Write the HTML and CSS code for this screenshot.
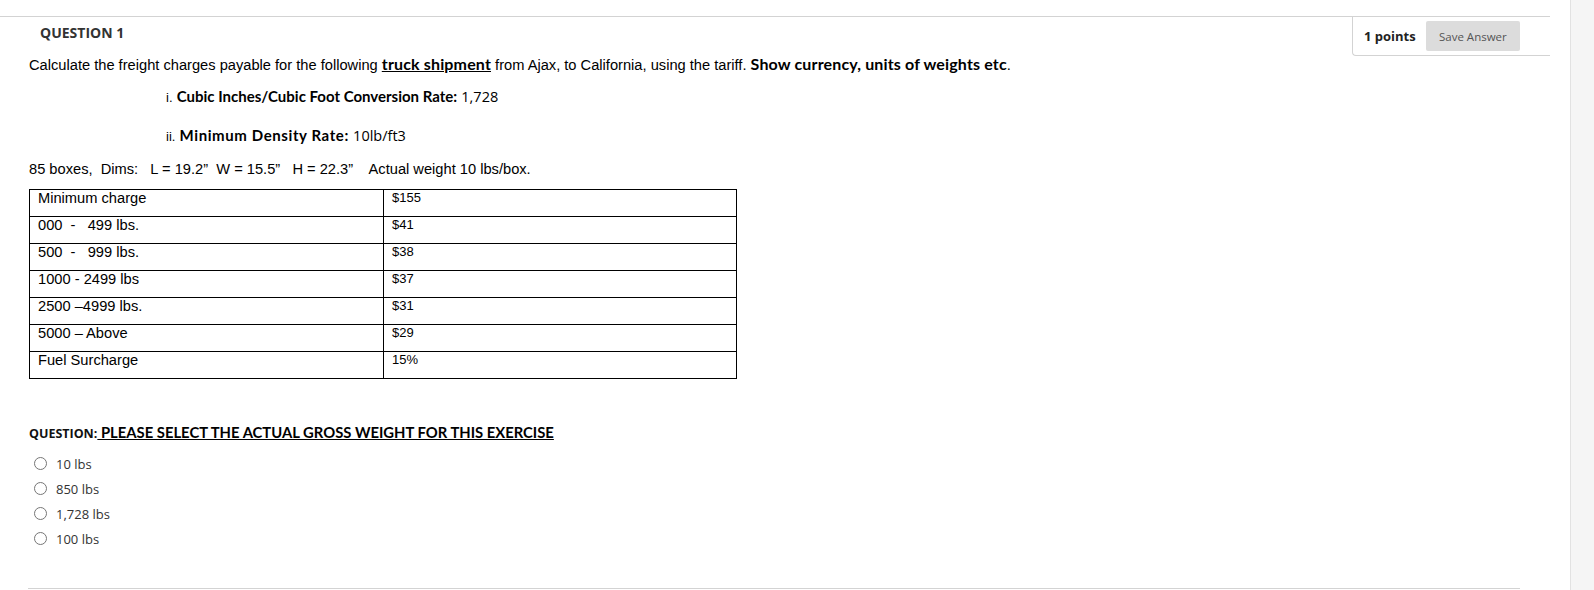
FILE: index.html
```html
<!DOCTYPE html>
<html>
<head>
<meta charset="utf-8">
<link rel="stylesheet" href="styles.css">
</head>
<body>
<div class="page">
  <main class="main">
    <section class="question">
      <header class="q-head">
        <h2 class="q-title">QUESTION 1</h2>
        <div class="q-points">
          <span class="points">1 points</span>
          <button class="save-btn">Save Answer</button>
        </div>
      </header>
      <div class="q-body">
        <p class="intro">Calculate the freight charges payable for the following <b class="cal u">truck shipment</b> from Ajax, to California, using the tariff. <b class="cal">Show currency, units of weights etc</b>.</p>
        <p class="item item-i"><span class="num">i.</span> <b class="cal">Cubic Inches/Cubic Foot Conversion Rate:</b> <span class="val">1,728</span></p>
        <p class="item item-ii"><span class="num">ii.</span> <b class="cal">Minimum Density Rate:</b> <span class="val">10lb/ft3</span></p>
        <p class="dims">85 boxes,&nbsp; Dims:&nbsp;&nbsp; L = 19.2”&nbsp; W = 15.5”&nbsp;&nbsp; H = 22.3”&nbsp;&nbsp;&nbsp; Actual weight 10 lbs/box.</p>
        <table class="tariff">
          <tr><td class="lbl">Minimum charge</td><td class="amt">$155</td></tr>
          <tr><td class="lbl">000&nbsp; -&nbsp;&nbsp; 499 lbs.</td><td class="amt">$41</td></tr>
          <tr><td class="lbl">500&nbsp; -&nbsp;&nbsp; 999 lbs.</td><td class="amt">$38</td></tr>
          <tr><td class="lbl">1000 - 2499 lbs</td><td class="amt">$37</td></tr>
          <tr><td class="lbl">2500 –4999 lbs.</td><td class="amt">$31</td></tr>
          <tr><td class="lbl">5000 – Above</td><td class="amt">$29</td></tr>
          <tr><td class="lbl">Fuel Surcharge</td><td class="amt">15%</td></tr>
        </table>
        <p class="ask"><span class="ask-lbl">QUESTION:</span><span class="ask-txt"> PLEASE SELECT THE ACTUAL GROSS WEIGHT FOR THIS EXERCISE</span></p>
        <div class="options">
          <label class="opt"><input type="radio" name="q1"><span>10 lbs</span></label>
          <label class="opt"><input type="radio" name="q1"><span>850 lbs</span></label>
          <label class="opt"><input type="radio" name="q1"><span>1,728 lbs</span></label>
          <label class="opt"><input type="radio" name="q1"><span>100 lbs</span></label>
        </div>
      </div>
      <div class="q-foot"></div>
    </section>
  </main>
  <aside class="side"></aside>
</div>
</body>
</html>
```
FILE: styles.css
```css
* { box-sizing: border-box; }
html, body { margin: 0; padding: 0; background: #fff; }
body { font-family: Arial, "Liberation Sans", sans-serif; color: #000; }

.page { display: flex; width: 1594px; height: 590px; overflow: hidden; }
.main { width: 1570px; flex: none; }
.side { flex: 1; background: #f5f5f5; border-left: 1px solid #e2e2e2; }

.question { margin-top: 16px; width: 1550px; border-top: 1px solid #d3d3d3; }

.q-head { display: flex; justify-content: space-between; align-items: flex-start; height: 39px; }
.q-title {
  margin: 0; padding: 6px 0 0 40px;
  font-family: "Open Sans", sans-serif; font-weight: 700; font-size: 14px; line-height: 19px;
  color: #333;
}
.q-points {
  width: 198px; height: 39px;
  display: flex; align-items: center; gap: 10px;
  padding: 0 30px 0 11px;
  border-left: 1px solid #d3d3d3; border-bottom: 1px solid #d3d3d3;
  border-bottom-left-radius: 4px;
}
.points { font-family: "Open Sans", sans-serif; font-weight: 700; font-size: 13px; color: #222; white-space: nowrap; }
.save-btn {
  margin-left: auto; width: 95px; height: 30px; border: none; border-radius: 2px;
  background: #dcdcdc; color: #555;
  font-family: "Open Sans", sans-serif; font-size: 11.5px; padding: 0;
}

.q-body { padding-left: 29px; }
.intro { margin: 0; font-size: 14.67px; line-height: 16px; white-space: nowrap; }
.cal { font-family: Lato, sans-serif; font-weight: 700; }
.intro .cal { font-size: 16px; letter-spacing: 0.15px; }
.u { text-decoration: underline; }

.item { margin: 0; padding-left: 137px; line-height: 20px; font-size: 15px; white-space: nowrap; }
.item-i { margin-top: 13px; }
.item-ii { margin-top: 17px; }
.item .num { font-family: Arial, sans-serif; font-size: 13px; }
.item .cal { font-size: 15px; }
.item-ii .cal { letter-spacing: 0.6px; }
.item .val { font-family: "Open Sans", sans-serif; font-size: 14.5px; }

.dims { margin: 12px 0 0; font-size: 14.67px; line-height: 20px; white-space: nowrap; }

.tariff { margin-top: 10px; border-collapse: collapse; width: 708px; table-layout: fixed; }
.tariff td {
  border: 1px solid #000; height: 27px; padding: 0 8px; vertical-align: top;
  font-size: 14.67px; line-height: 16px;
}
.tariff td.lbl { width: 354px; }
.tariff td.amt { font-size: 13px; }

.ask { margin: 43px 0 0; line-height: 20px; white-space: nowrap; }
.ask-lbl { font-family: "Open Sans", sans-serif; font-weight: 700; font-size: 12.5px; color: #111; }
.ask-txt { font-family: Lato, sans-serif; font-weight: 700; font-size: 14.8px; text-decoration: underline; }

.options { margin-top: 7px; display: flex; flex-direction: column; }
.opt { display: flex; align-items: center; height: 25px; padding-left: 5px; gap: 9px; }
.opt input {
  appearance: none; -webkit-appearance: none; margin: 0;
  width: 13px; height: 13px; border: 1px solid #767676; border-radius: 50%; background: #fff;
}
.opt span { font-family: "Open Sans", sans-serif; font-size: 13px; color: #333; }

.q-foot { margin: 37px 0 0 28px; width: 1492px; border-top: 1px solid #d3d3d3; }
```
